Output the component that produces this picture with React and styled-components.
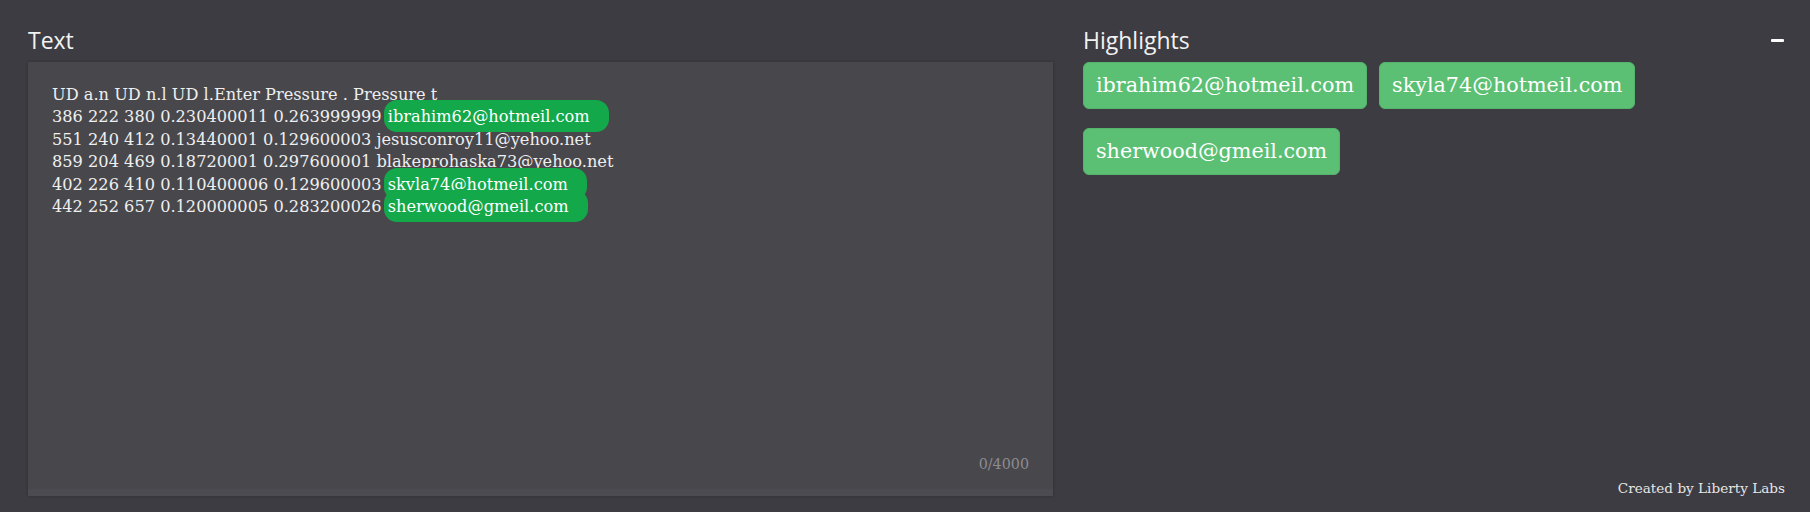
import React from "react";
import styled, { createGlobalStyle } from "styled-components";

const GlobalStyle = createGlobalStyle`
  html, body {
    margin: 0;
    padding: 0;
    background: #3d3c42;
  }
`;

const Page = styled.div`
  height: 512px;
  box-sizing: border-box;
  display: grid;
  grid-template-columns: 1025px 1fr;
  column-gap: 30px;
  padding: 25px 25px 16px 28px;
  background: #3d3c42;
`;

const Column = styled.div`
  display: flex;
  flex-direction: column;
  min-height: 0;
`;

const Header = styled.div`
  display: flex;
  align-items: center;
  justify-content: space-between;
  margin-bottom: 6px;
`;

const Label = styled.h2`
  margin: 0;
  font-family: "Open Sans", sans-serif;
  font-weight: 400;
  font-size: 23px;
  line-height: 31px;
  color: #f2f2f2;
`;

const CollapseButton = styled.button`
  display: flex;
  align-items: center;
  justify-content: center;
  width: 15px;
  height: 20px;
  padding: 0;
  border: none;
  background: none;
  cursor: pointer;

  span {
    display: block;
    width: 13px;
    height: 3px;
    border-radius: 1px;
    background: #ffffff;
  }
`;

const Panel = styled.div`
  flex: 1;
  display: flex;
  flex-direction: column;
  padding: 22px 24px 24px 24px;
  background: #48474c;
  box-shadow: 0 0 3px rgba(0, 0, 0, 0.25), inset 0 -7px 0 #4c4b51;
`;

const TextBody = styled.div`
  flex: 1;
  font-family: "DejaVu Serif", serif;
  font-size: 16.2px;
  line-height: 22.4px;
  color: #efefef;
  white-space: pre;
`;

const Mark = styled.mark`
  background: #13a94a;
  color: #ffffff;
  padding: 7px 19px 6px 4px;
  margin-left: -3px;
  border-radius: 13px;
`;

const Counter = styled.div`
  align-self: flex-end;
  font-family: "DejaVu Serif", serif;
  font-size: 14.3px;
  color: #8d8c91;
`;

const ChipList = styled.div`
  display: flex;
  flex-wrap: wrap;
  gap: 19px 12px;
`;

const Chip = styled.span`
  padding: 10px 12px;
  border-radius: 6px;
  background: #5bbf74;
  border: 1px solid #54b46c;
  font-family: "DejaVu Serif", serif;
  font-size: 20.7px;
  line-height: 25px;
  color: #ffffff;
`;

const Footer = styled.div`
  margin-top: auto;
  text-align: right;
  font-family: "DejaVu Serif", serif;
  font-size: 13.6px;
  color: #e6e6e6;
`;

const rows = [
  { text: "UD a.n UD n.l UD l.Enter Pressure . Pressure t" },
  { text: "386 222 380 0.230400011 0.263999999 ", email: "ibrahim62@hotmeil.com", hit: true },
  { text: "551 240 412 0.13440001 0.129600003 ", email: "jesusconroy11@yehoo.net" },
  { text: "859 204 469 0.18720001 0.297600001 ", email: "blakeprohaska73@yehoo.net" },
  { text: "402 226 410 0.110400006 0.129600003 ", email: "skyla74@hotmeil.com", hit: true },
  { text: "442 252 657 0.120000005 0.283200026 ", email: "sherwood@gmeil.com", hit: true },
];

const highlights = ["ibrahim62@hotmeil.com", "skyla74@hotmeil.com", "sherwood@gmeil.com"];

export default function App() {
  return (
    <>
      <GlobalStyle />
      <Page>
        <Column>
          <Header>
            <Label>Text</Label>
          </Header>
          <Panel>
            <TextBody>
              {rows.map((row, i) => (
                <div key={i}>
                  {row.text}
                  {row.email && (row.hit ? <Mark>{row.email}</Mark> : row.email)}
                </div>
              ))}
            </TextBody>
            <Counter>0/4000</Counter>
          </Panel>
        </Column>
        <Column>
          <Header>
            <Label>Highlights</Label>
            <CollapseButton aria-label="collapse">
              <span />
            </CollapseButton>
          </Header>
          <ChipList>
            {highlights.map((h) => (
              <Chip key={h}>{h}</Chip>
            ))}
          </ChipList>
          <Footer>Created by Liberty Labs</Footer>
        </Column>
      </Page>
    </>
  );
}
